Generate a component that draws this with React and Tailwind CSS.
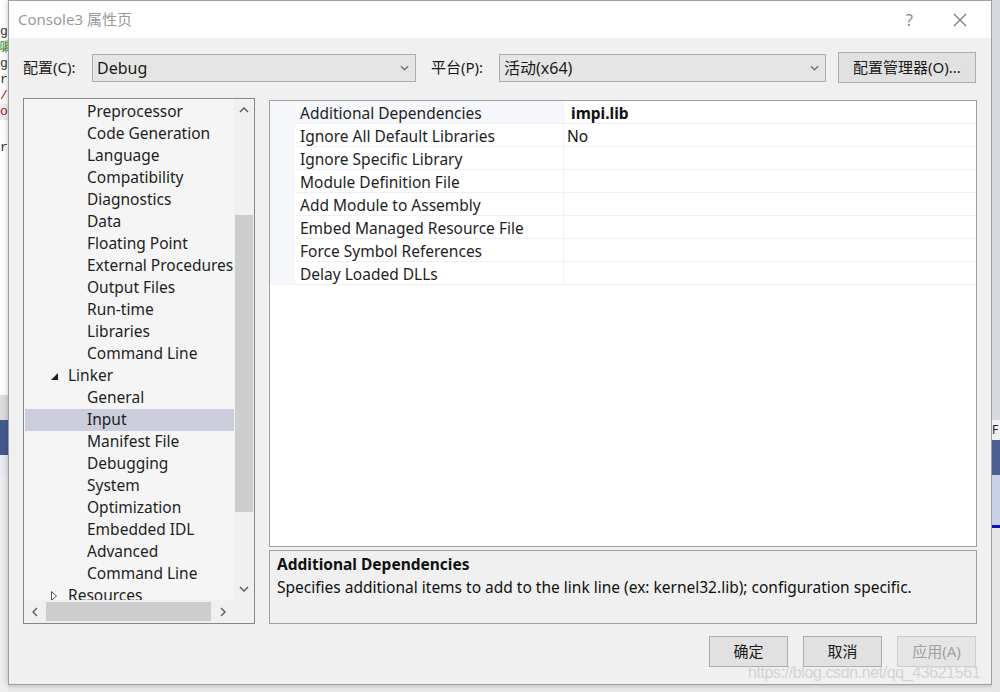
import React from 'react';

const treeItems = [
  { label: 'Preprocessor', level: 2 },
  { label: 'Code Generation', level: 2 },
  { label: 'Language', level: 2 },
  { label: 'Compatibility', level: 2 },
  { label: 'Diagnostics', level: 2 },
  { label: 'Data', level: 2 },
  { label: 'Floating Point', level: 2 },
  { label: 'External Procedures', level: 2 },
  { label: 'Output Files', level: 2 },
  { label: 'Run-time', level: 2 },
  { label: 'Libraries', level: 2 },
  { label: 'Command Line', level: 2 },
  { label: 'Linker', level: 1, open: true },
  { label: 'General', level: 2 },
  { label: 'Input', level: 2, selected: true },
  { label: 'Manifest File', level: 2 },
  { label: 'Debugging', level: 2 },
  { label: 'System', level: 2 },
  { label: 'Optimization', level: 2 },
  { label: 'Embedded IDL', level: 2 },
  { label: 'Advanced', level: 2 },
  { label: 'Command Line', level: 2 },
  { label: 'Resources', level: 1, open: false },
];

const props = [
  ['Additional Dependencies', 'impi.lib'],
  ['Ignore All Default Libraries', 'No'],
  ['Ignore Specific Library', ''],
  ['Module Definition File', ''],
  ['Add Module to Assembly', ''],
  ['Embed Managed Resource File', ''],
  ['Force Symbol References', ''],
  ['Delay Loaded DLLs', ''],
];

const font = { fontFamily: '"Noto Sans", "Noto Sans CJK SC", sans-serif' };

const Chevron = ({ dir = 'down', className = '' }) => {
  const d = {
    down: 'M1 1 L5 5 L9 1',
    up: 'M1 5 L5 1 L9 5',
    left: 'M5 1 L1 5 L5 9',
    right: 'M1 1 L5 5 L1 9',
  }[dir];
  const vert = dir === 'down' || dir === 'up';
  return (
    <svg width={vert ? 10 : 6} height={vert ? 6 : 10} viewBox={vert ? '0 0 10 6' : '0 0 6 10'} className={className}>
      <path d={d} fill="none" stroke="currentColor" strokeWidth="1.5" />
    </svg>
  );
};

const Select = ({ value, width }) => (
  <div className={`h-[28px] ${width} bg-[#e5e5e5] border border-[#adadad] flex items-center justify-between pl-[4px] pr-[6px] text-[16px] text-[#1a1a1a]`}>
    <span>{value}</span>
    <Chevron dir="down" className="text-[#707070] w-[9px]" />
  </div>
);

const App = () => {
  return (
    <div className="w-[1000px] h-[692px] bg-[#e9e9ea] flex overflow-hidden relative" style={font}>
      {/* backdrop left */}
      <div className="w-[8px] h-[692px] flex flex-col overflow-hidden">
        <div className="h-[395px] bg-white flex flex-col pt-[24px] text-[13px] leading-[16px] font-mono">
          <span className="text-[#333]">g</span>
          <span className="text-[#1a7a1a]">嘱</span>
          <span className="text-[#333]">g</span>
          <span className="text-[#333]">r</span>
          <span className="text-[#a31515]">/</span>
          <span className="text-[#a31515] bg-[#eeeeee]">o</span>
          <span className="text-[#333] mt-[20px]">r</span>
        </div>
        <div className="h-[25px] bg-[#dcdcdc]" />
        <div className="h-[35px] bg-[#44598f]" />
        <div className="h-[20px] bg-[#e8eaf3]" />
        <div className="flex-1 bg-[#eeeeee]" />
      </div>

      {/* dialog */}
      <div className="w-[984px] h-[685px] border border-[#a0a0a0] bg-[#f0f0f0] flex flex-col shadow-[0_0_6px_rgba(0,0,0,0.25)]">
        {/* title bar */}
        <div className="h-[37px] bg-white flex items-center justify-between pl-[9px] pr-[24px]">
          <span className="text-[15px] text-[#9a9a9a]">Console3 属性页</span>
          <div className="flex items-center gap-[40px] text-[#8a8a8a]">
            <span className="text-[16px]">?</span>
            <svg width="14" height="14" viewBox="0 0 14 14">
              <path d="M1 1 L13 13 M13 1 L1 13" stroke="#7a7a7a" strokeWidth="1.2" />
            </svg>
          </div>
        </div>

        {/* config row */}
        <div className="flex items-center pl-[14px] pr-[15px] mt-[14px] h-[31px]">
          <span className="text-[15px] text-[#1a1a1a] w-[69px] leading-[20px] -mt-[1px]">配置(C):</span>
          <Select value="Debug" width="w-[324px]" />
          <span className="text-[15px] text-[#1a1a1a] ml-[15px] w-[68px] leading-[20px] -mt-[1px]">平台(P):</span>
          <Select value="活动(x64)" width="w-[327px]" />
          <div className="ml-[12px] w-[138px] h-[31px] bg-[#e1e1e1] border border-[#adadad] flex items-center justify-center text-[15px] text-[#1a1a1a] pb-[1px]">
            配置管理器(O)...
          </div>
        </div>

        {/* main area */}
        <div className="flex pl-[14px] mt-[15px] gap-[14px]">
          {/* tree */}
          <div className="w-[232px] h-[526px] border border-[#828790] bg-[#f0f0f0] flex flex-col">
            <div className="flex h-[501px]">
              <div className="w-[210px] bg-[#f5f5f5] overflow-hidden pt-[2px]">
                {treeItems.map((it, i) => (
                  <div
                    key={i}
                    className={`h-[22px] flex items-center text-[15.5px] text-[#1e1e1e] whitespace-nowrap ${it.selected ? 'bg-[#cccedb] ml-[1px]' : ''} ${it.level === 1 ? 'pl-[27px]' : it.selected ? 'pl-[62px]' : 'pl-[63px]'}`}
                  >
                    {it.level === 1 && (
                      <span className="w-[17px] flex items-center">
                        {it.open ? (
                          <svg width="7" height="7" viewBox="0 0 7 7"><path d="M7 0 L7 7 L0 7 Z" fill="#1e1e1e" /></svg>
                        ) : (
                          <svg width="6" height="10" viewBox="0 0 6 10"><path d="M0.5 0.5 L5.5 5 L0.5 9.5 Z" fill="none" stroke="#555" /></svg>
                        )}
                      </span>
                    )}
                    {it.label}
                  </div>
                ))}
              </div>
              {/* vertical scrollbar */}
              <div className="w-[20px] bg-[#f0f0f0] flex flex-col items-center">
                <div className="h-[22px] flex items-center justify-center text-[#606060]">
                  <Chevron dir="up" />
                </div>
                <div className="flex-1 w-full px-[1px] pt-[94px] pb-[66px]">
                  <div className="w-full h-full bg-[#cdcdcd]" />
                </div>
                <div className="h-[22px] flex items-center justify-center text-[#606060]">
                  <Chevron dir="down" />
                </div>
              </div>
            </div>
            {/* horizontal scrollbar */}
            <div className="flex h-[23px]">
              <div className="w-[210px] flex items-center bg-[#f0f0f0]">
                <div className="w-[22px] flex justify-center text-[#606060]"><Chevron dir="left" /></div>
                <div className="w-[165px] h-[19px] bg-[#cdcdcd]" />
                <div className="w-[23px] flex justify-center text-[#606060]"><Chevron dir="right" /></div>
              </div>
              <div className="w-[20px] bg-[#f0f0f0]" />
            </div>
          </div>

          {/* right side */}
          <div className="flex flex-col pt-[2px]">
            <div className="w-[708px] h-[447px] border border-[#a0a0a0] bg-white">
              {props.map(([name, value], i) => (
                <div key={i} className="h-[23px] flex">
                  <div className="w-[25px] bg-[#f5f7fb]" />
                  <div className={`w-[268px] border-b border-[#eef0f5] flex items-center pt-[4px] pl-[5px] text-[15.5px] text-[#1e1e1e] whitespace-nowrap ${i === 0 ? 'bg-[#f5f7fb]' : ''}`}>
                    {name}
                  </div>
                  <div className="flex-1 border-b border-l border-[#eef0f5] flex items-center pt-[4px] pl-[3px] text-[15.5px] text-[#111]">
                    <span className={i === 0 ? 'font-bold pl-[4px]' : ''}>{value}</span>
                  </div>
                </div>
              ))}
            </div>
            <div className="w-[708px] h-[74px] mt-[3px] border border-[#a0a0a0] bg-[#f0f0f0] px-[7px] pt-[2px]">
              <div className="text-[15.5px] font-bold text-[#111] leading-[23px]">Additional Dependencies</div>
              <div className="text-[15.5px] text-[#111] leading-[23px]">
                Specifies additional items to add to the link line (ex: kernel32.lib); configuration specific.
              </div>
            </div>
          </div>
        </div>

        {/* buttons */}
        <div className="flex justify-end gap-[15px] pr-[15px] mt-[12px]">
          <div className="w-[79px] h-[31px] bg-[#e1e1e1] border border-[#adadad] flex items-center justify-center text-[15px] text-[#1a1a1a]">确定</div>
          <div className="w-[79px] h-[31px] bg-[#e1e1e1] border border-[#adadad] flex items-center justify-center text-[15px] text-[#1a1a1a]">取消</div>
          <div className="w-[79px] h-[31px] bg-[#e5e5e5] border border-[#cccccc] flex items-center justify-center text-[15px] text-[#a0a0a0]">应用(A)</div>
        </div>
      </div>

      {/* backdrop right */}
      <div className="w-[8px] h-[692px] flex flex-col overflow-hidden">
        <div className="h-[420px] bg-[#d8d9e0]" />
        <div className="h-[20px] bg-[#f0f0f0] text-[12px] leading-[20px] text-[#222]">F</div>
        <div className="h-[35px] bg-[#4a5f94]" />
        <div className="h-[50px] bg-[#c9d0e8]" />
        <div className="h-[3px] bg-[#1010c0]" />
        <div className="flex-1 bg-[#e6e6e6]" />
      </div>

      {/* watermark */}
      <div className="absolute left-[748px] top-[661px] text-[16px] text-[#d4d4d4] tracking-tight" style={{ fontFamily: '"Liberation Sans", sans-serif' }}>
        https://blog.csdn.net/qq_43621561
      </div>
    </div>
  );
};

export default App;
